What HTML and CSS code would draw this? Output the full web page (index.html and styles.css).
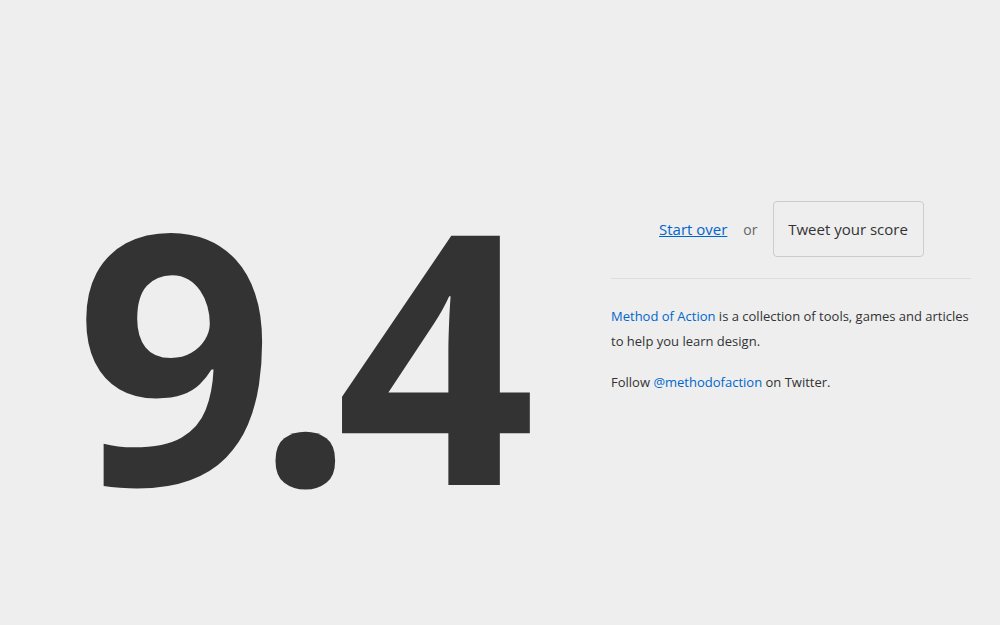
FILE: index.html
```html
<!DOCTYPE html>
<html>
<head>
<meta charset="utf-8">
<link rel="stylesheet" href="styles.css">
</head>
<body>
<main class="page">
  <div class="score">9.4</div>
  <section class="side">
    <div class="actions">
      <a class="restart" href="#">Start over</a>
      <span class="or">or</span>
      <button class="tweet">Tweet your score</button>
    </div>
    <hr class="rule">
    <p class="info"><a href="#">Method of Action</a> is a collection of tools, games and articles to help you learn design.</p>
    <p class="info">Follow <a href="#">@methodofaction</a> on Twitter.</p>
  </section>
</main>
</body>
</html>
```

FILE: styles.css
```css
html, body {
  margin: 0;
  padding: 0;
  background: #eeeeee;
  height: 100%;
}
body {
  font-family: "Open Sans", "Liberation Sans", sans-serif;
  color: #333333;
  overflow: hidden;
}
.page {
  display: flex;
  align-items: flex-start;
  height: 625px;
}
.score {
  width: 611px;
  box-sizing: border-box;
  padding-left: 75px;
  margin-top: 175px;
  font-family: "Open Sans", sans-serif;
  font-weight: 700;
  font-size: 349px;
  line-height: 1;
  letter-spacing: -19px;
  color: #333333;
}
.side {
  width: 360px;
  margin-top: 201px;
}
.actions {
  display: flex;
  align-items: center;
  padding-left: 48px;
  height: 56px;
}
.restart {
  color: #0066cc;
  font-size: 15px;
  text-decoration: underline;
}
.or {
  color: #666666;
  font-size: 14px;
  margin: 0 15px 0 16px;
}
.tweet {
  box-sizing: border-box;
  height: 56px;
  width: 151px;
  border: 1px solid #cccccc;
  border-radius: 4px;
  background: #eeeeee;
  font-family: "Open Sans", sans-serif;
  font-size: 15px;
  color: #333333;
  padding: 0;
}
.rule {
  border: 0;
  border-top: 1px solid #dddddd;
  margin: 21px 0 25px 0;
}
.info {
  margin: 0 0 16px 0;
  font-size: 13px;
  line-height: 25px;
  color: #333333;
}
.info a {
  color: #0066cc;
  text-decoration: none;
}
```
